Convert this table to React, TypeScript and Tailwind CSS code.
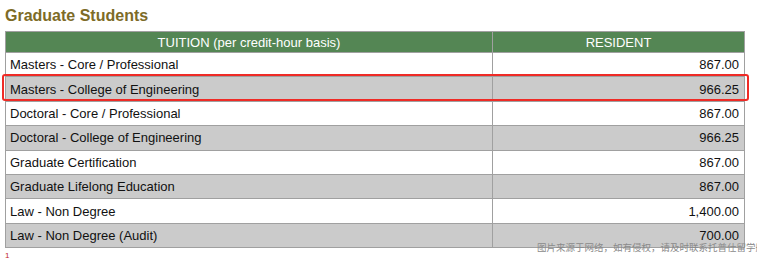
const rows = [
  { label: 'Masters - Core / Professional', value: '867.00' },
  { label: 'Masters - College of Engineering', value: '966.25' },
  { label: 'Doctoral - Core / Professional', value: '867.00' },
  { label: 'Doctoral - College of Engineering', value: '966.25' },
  { label: 'Graduate Certification', value: '867.00' },
  { label: 'Graduate Lifelong Education', value: '867.00' },
  { label: 'Law - Non Degree', value: '1,400.00' },
  { label: 'Law - Non Degree (Audit)', value: '700.00' },
];

export default function App() {
  return (
    <div className="relative h-[259px] w-[757px] overflow-hidden bg-white font-['Liberation_Sans',Arial,sans-serif] text-[#111]">
      <h2 className="h-[31px] pl-[5px] pt-[6px] text-[16px] font-bold leading-[19px] text-[#7d6b27]">
        Graduate Students
      </h2>

      {/* Tuition table */}
      <div className="ml-[5px] w-[740px] border border-[#a0a0a0] text-[13px] leading-none">
        <div className="grid h-[20px] grid-cols-[486px_1fr] bg-[#548654] text-white">
          <div className="flex items-center justify-center">TUITION (per credit-hour basis)</div>
          <div className="flex items-center justify-center border-l border-[#a0a0a0]">RESIDENT</div>
        </div>
        {rows.map((row, i) => (
          <div
            key={row.label}
            className={`grid h-[24.4px] grid-cols-[486px_1fr] border-t border-[#a0a0a0] ${
              i % 2 === 1 ? 'bg-[#cbcbcb]' : 'bg-white'
            }`}
          >
            <div className="flex items-center pl-[4px]">{row.label}</div>
            <div className="flex items-center justify-end border-l border-[#a0a0a0] pr-[5px]">{row.value}</div>
          </div>
        ))}
      </div>

      {/* highlight */}
      <div className="absolute left-[2px] top-[74px] h-[27px] w-[747px] rounded-[3px] border-2 border-[#ef2b26]" />

      <div className="absolute left-[537px] top-[243px] whitespace-nowrap font-['Noto_Sans_CJK_SC',sans-serif] text-[9.5px] leading-none text-[#8a8a8a]">
        图片来源于网络，如有侵权，请及时联系托普仕留学删除
      </div>
      <div className="absolute left-[5px] top-[252px] text-[8px] leading-none text-[#c0282a]">1</div>
    </div>
  );
}
